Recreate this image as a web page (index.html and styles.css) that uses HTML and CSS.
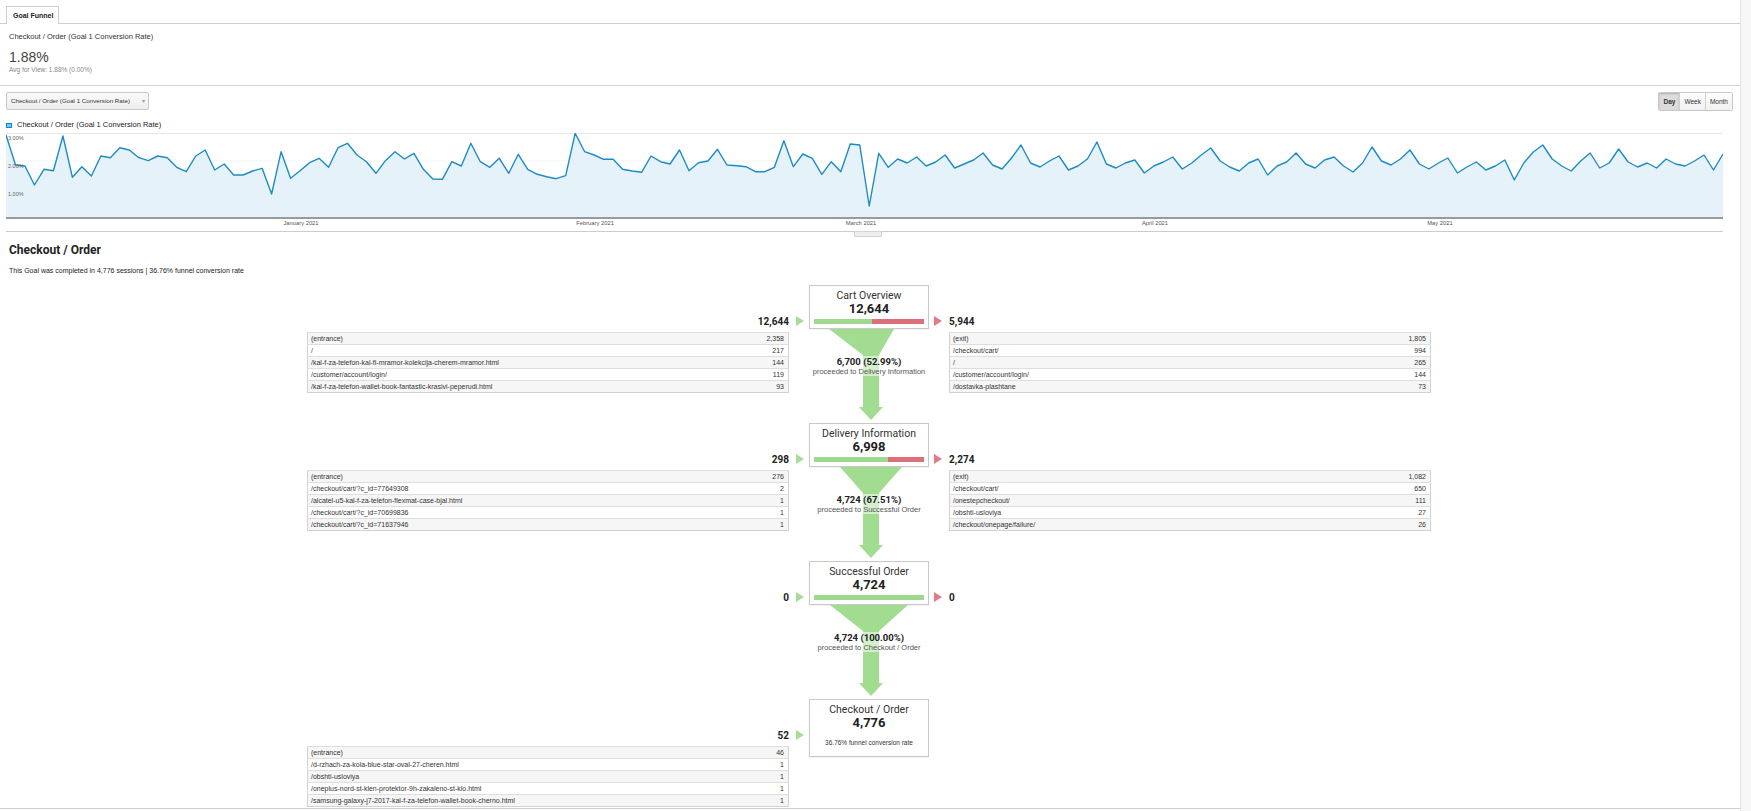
FILE: index.html
```html
<!DOCTYPE html>
<html>
<head>
<meta charset="utf-8">
<title>Goal Funnel</title>
<link rel="stylesheet" href="styles.css">
</head>
<body>
<div class="page">
  <div class="tabs"><div class="tab">Goal Funnel</div></div>

  <div class="summary">
    <div class="metric-title">Checkout / Order (Goal 1 Conversion Rate)</div>
    <div class="metric-value">1.88%</div>
    <div class="metric-avg">Avg for View: 1.88% (0.00%)</div>
  </div>

  <div class="controls">
    <div class="dropdown"><span class="dd-text">Checkout / Order (Goal 1 Conversion Rate)</span><span class="caret">▾</span></div>
    <div class="period"><span class="btn active">Day</span><span class="btn">Week</span><span class="btn">Month</span></div>
  </div>

  <div class="legend"><span class="swatch"></span>Checkout / Order (Goal 1 Conversion Rate)</div>

  <div class="chart">
    <svg class="chart-svg" viewBox="0 0 181 84" preserveAspectRatio="none">
      <line class="grid" x1="0" y1="0.5" x2="181" y2="0.5"/>
      <line class="grid faint" x1="0" y1="28" x2="181" y2="28"/>
      <line class="grid faint" x1="0" y1="56" x2="181" y2="56"/>
      <polygon class="area" points="0,84 0,2 1,32 2,33 3,52 4,36.3 5,37.7 6,3 7,44.3 8,33.7 9,43 10,23 11,24.7 12,14.7 13,17 14,24.7 15,27.7 16,23 17,24.7 18,34.3 19,38.7 20,23 21,17 22,37 23,31 24,42 25,42 26,38 27,35.3 28,61 29,18.7 30,45.3 31,37.7 32,29.7 33,25.3 34,34.3 35,14.7 36,10.3 37,22 38,28.7 39,40.3 40,27.7 41,18.7 42,26 43,20.3 44,36.3 45,46 46,46.3 47,28.7 48,33 49,10.3 50,28.7 51,34.3 52,25.3 53,40.3 54,21.3 55,36.3 56,41.3 57,43.7 58,45.7 59,42.7 60,0.3 61,18.7 62,22 63,26.3 64,26.3 65,36.3 66,38 67,39.3 68,23 69,28.7 70,31 71,17 72,37.7 73,29.7 74,28 75,16.3 76,32 77,32.7 78,33.7 79,38.7 80,38.7 81,34.3 82,7.7 83,33.7 84,21 85,25.3 86,41.3 87,28.7 88,38.7 89,11 90,12 91,73 92,20.3 93,34.3 94,26 95,30 96,24 97,33 98,29 99,22 100,35 101,31 102,27 103,20 104,32 105,36 106,25 107,12 108,30 109,34 110,28 111,23 112,37 113,33 114,26 115,9 116,31 117,35 118,30 119,27 120,40 121,33 122,29 123,24 124,36 125,30 126,22 127,15 128,28 129,34 130,38 131,30 132,26 133,42 134,33 135,29 136,20 137,31 138,35 139,27 140,24 141,33 142,39 143,30 144,14 145,28 146,32 147,26 148,17 149,31 150,36 151,30 152,25 153,40 154,34 155,29 156,37 157,33 158,27 159,47 160,30 161,19 162,12 163,26 164,33 165,38 166,28 167,20 168,35 169,30 170,16 171,29 172,34 173,30 174,35 175,26 176,31 177,33 178,28 179,22 180,37 181,21 181,84"/>
      <polyline class="line" points="0,2 1,32 2,33 3,52 4,36.3 5,37.7 6,3 7,44.3 8,33.7 9,43 10,23 11,24.7 12,14.7 13,17 14,24.7 15,27.7 16,23 17,24.7 18,34.3 19,38.7 20,23 21,17 22,37 23,31 24,42 25,42 26,38 27,35.3 28,61 29,18.7 30,45.3 31,37.7 32,29.7 33,25.3 34,34.3 35,14.7 36,10.3 37,22 38,28.7 39,40.3 40,27.7 41,18.7 42,26 43,20.3 44,36.3 45,46 46,46.3 47,28.7 48,33 49,10.3 50,28.7 51,34.3 52,25.3 53,40.3 54,21.3 55,36.3 56,41.3 57,43.7 58,45.7 59,42.7 60,0.3 61,18.7 62,22 63,26.3 64,26.3 65,36.3 66,38 67,39.3 68,23 69,28.7 70,31 71,17 72,37.7 73,29.7 74,28 75,16.3 76,32 77,32.7 78,33.7 79,38.7 80,38.7 81,34.3 82,7.7 83,33.7 84,21 85,25.3 86,41.3 87,28.7 88,38.7 89,11 90,12 91,73 92,20.3 93,34.3 94,26 95,30 96,24 97,33 98,29 99,22 100,35 101,31 102,27 103,20 104,32 105,36 106,25 107,12 108,30 109,34 110,28 111,23 112,37 113,33 114,26 115,9 116,31 117,35 118,30 119,27 120,40 121,33 122,29 123,24 124,36 125,30 126,22 127,15 128,28 129,34 130,38 131,30 132,26 133,42 134,33 135,29 136,20 137,31 138,35 139,27 140,24 141,33 142,39 143,30 144,14 145,28 146,32 147,26 148,17 149,31 150,36 151,30 152,25 153,40 154,34 155,29 156,37 157,33 158,27 159,47 160,30 161,19 162,12 163,26 164,33 165,38 166,28 167,20 168,35 169,30 170,16 171,29 172,34 173,30 174,35 175,26 176,31 177,33 178,28 179,22 180,37 181,21"/>
    </svg>
    <span class="ylabel y3">3.00%</span>
    <span class="ylabel y2">2.00%</span>
    <span class="ylabel y1">1.00%</span>
  </div>

  <div class="xaxis">
    <span class="xlabel" style="left:295px">January 2021</span>
    <span class="xlabel" style="left:589px">February 2021</span>
    <span class="xlabel" style="left:855px">March 2021</span>
    <span class="xlabel" style="left:1149px">April 2021</span>
    <span class="xlabel" style="left:1434px">May 2021</span>
  </div>
  <div class="slider"><span class="handle"></span></div>

  <div class="funnel-head">
    <h2>Checkout / Order</h2>
    <p>This Goal was completed in 4,776 sessions | 36.76% funnel conversion rate</p>
  </div>

  <div class="funnel">
    <!-- Step 1 -->
    <div class="side left r1">
      <div class="num-row"><span class="num">12,644</span><span class="tri green"></span></div>
      <table class="pages">
        <tr><td>(entrance)</td><td class="v">2,358</td></tr>
        <tr><td>/</td><td class="v">217</td></tr>
        <tr><td>/kal-f-za-telefon-kal-fi-mramor-kolekcija-cherem-mramor.html</td><td class="v">144</td></tr>
        <tr><td>/customer/account/login/</td><td class="v">119</td></tr>
        <tr><td>/kal-f-za-telefon-wallet-book-fantastic-krasivi-peperudi.html</td><td class="v">93</td></tr>
      </table>
    </div>
    <div class="step r1">
      <div class="step-title">Cart Overview</div>
      <div class="step-num">12,644</div>
      <div class="bar"><span class="ok" style="width:53%"></span><span class="out"></span></div>
    </div>
    <div class="side right r1">
      <div class="num-row"><span class="tri red"></span><span class="num">5,944</span></div>
      <table class="pages">
        <tr><td>(exit)</td><td class="v">1,805</td></tr>
        <tr><td>/checkout/cart/</td><td class="v">994</td></tr>
        <tr><td>/</td><td class="v">265</td></tr>
        <tr><td>/customer/account/login/</td><td class="v">144</td></tr>
        <tr><td>/dostavka-plashtane</td><td class="v">73</td></tr>
      </table>
    </div>
    <div class="conn c1">
      <svg viewBox="0 0 120 94"><polygon points="20,0 85,0 70,26 70,78 74,78 62,91 50,78 54,78 54,26"/></svg>
      <div class="conn-label"><b>6,700 (52.99%)</b><span>proceeded to Delivery Information</span></div>
    </div>

    <!-- Step 2 -->
    <div class="side left r3">
      <div class="num-row"><span class="num">298</span><span class="tri green"></span></div>
      <table class="pages">
        <tr><td>(entrance)</td><td class="v">276</td></tr>
        <tr><td>/checkout/cart/?c_id=77649308</td><td class="v">2</td></tr>
        <tr><td>/alcatel-u5-kal-f-za-telefon-flexmat-case-bjal.html</td><td class="v">1</td></tr>
        <tr><td>/checkout/cart/?c_id=70699836</td><td class="v">1</td></tr>
        <tr><td>/checkout/cart/?c_id=71637946</td><td class="v">1</td></tr>
      </table>
    </div>
    <div class="step r3">
      <div class="step-title">Delivery Information</div>
      <div class="step-num">6,998</div>
      <div class="bar"><span class="ok" style="width:67.5%"></span><span class="out"></span></div>
    </div>
    <div class="side right r3">
      <div class="num-row"><span class="tri red"></span><span class="num">2,274</span></div>
      <table class="pages">
        <tr><td>(exit)</td><td class="v">1,082</td></tr>
        <tr><td>/checkout/cart/</td><td class="v">650</td></tr>
        <tr><td>/onestepcheckout/</td><td class="v">111</td></tr>
        <tr><td>/obshti-usloviya</td><td class="v">27</td></tr>
        <tr><td>/checkout/onepage/failure/</td><td class="v">26</td></tr>
      </table>
    </div>
    <div class="conn c2">
      <svg viewBox="0 0 120 94"><polygon points="31,0 93,0 70,26 70,78 74,78 62,91 50,78 54,78 54,26"/></svg>
      <div class="conn-label"><b>4,724 (67.51%)</b><span>proceeded to Successful Order</span></div>
    </div>

    <!-- Step 3 -->
    <div class="side left r5">
      <div class="num-row"><span class="num">0</span><span class="tri green"></span></div>
    </div>
    <div class="step r5">
      <div class="step-title">Successful Order</div>
      <div class="step-num">4,724</div>
      <div class="bar"><span class="ok" style="width:100%"></span></div>
    </div>
    <div class="side right r5">
      <div class="num-row"><span class="tri red"></span><span class="num">0</span></div>
    </div>
    <div class="conn c3">
      <svg viewBox="0 0 120 94"><polygon points="21,0 99,0 70,26 70,78 74,78 62,91 50,78 54,78 54,26"/></svg>
      <div class="conn-label"><b>4,724 (100.00%)</b><span>proceeded to Checkout / Order</span></div>
    </div>

    <!-- Step 4 -->
    <div class="side left r7">
      <div class="num-row"><span class="num">52</span><span class="tri green"></span></div>
      <table class="pages">
        <tr><td>(entrance)</td><td class="v">46</td></tr>
        <tr><td>/d-rzhach-za-kola-blue-star-oval-27-cheren.html</td><td class="v">1</td></tr>
        <tr><td>/obshti-usloviya</td><td class="v">1</td></tr>
        <tr><td>/oneplus-nord-st-klen-protektor-9h-zakaleno-st-klo.html</td><td class="v">1</td></tr>
        <tr><td>/samsung-galaxy-j7-2017-kal-f-za-telefon-wallet-book-cherno.html</td><td class="v">1</td></tr>
      </table>
    </div>
    <div class="step goal r7">
      <div class="step-title">Checkout / Order</div>
      <div class="step-num">4,776</div>
      <div class="step-rate">36.76% funnel conversion rate</div>
    </div>
  </div>
</div>
<div class="scrollbar"></div>
</body>
</html>
```

FILE: styles.css
```css
html, body {
  margin: 0;
  padding: 0;
  background: #ffffff;
  overflow: hidden;
}
body {
  display: flex;
  width: 1751px;
  height: 811px;
  font-family: "Liberation Sans", Arial, sans-serif;
  color: #333;
}
.page {
  width: 1740px;
  flex: none;
}
.scrollbar {
  flex: 1;
  background: #f7f7f7;
  border-left: 1px solid #e4e4e4;
}

/* tabs */
.tabs {
  height: 23px;
  border-bottom: 1px solid #cfcfcf;
  display: flex;
  align-items: flex-end;
  padding-left: 6px;
}
.tab {
  height: 17px;
  line-height: 17px;
  padding: 0 5px 0 6px;
  border: 1px solid #cfcfcf;
  border-bottom: none;
  background: #fff;
  margin-bottom: -1px;
  font-size: 7px;
  font-weight: bold;
  color: #222;
}

/* summary */
.summary {
  padding: 8px 9px 11px;
  border-bottom: 1px solid #d6d6d6;
}
.metric-title {
  font-size: 7.5px;
  line-height: 10px;
  color: #333;
}
.metric-value {
  margin-top: 7px;
  font-size: 14px;
  line-height: 16px;
  color: #444;
}
.metric-avg {
  margin-top: 1px;
  font-size: 6.5px;
  line-height: 8px;
  color: #888;
}

/* controls */
.controls {
  display: flex;
  justify-content: space-between;
  align-items: flex-start;
  padding: 6px 7px 0 6px;
}
.dropdown {
  box-sizing: border-box;
  width: 143px;
  height: 18px;
  line-height: 16px;
  border: 1px solid #c8c8c8;
  border-radius: 2px;
  background: linear-gradient(#fafafa, #eeeeee);
  font-size: 6.2px;
  color: #333;
  padding-left: 4px;
  display: flex;
  white-space: nowrap;
  overflow: hidden;
}
.dd-text { flex: none; }
.caret {
  color: #999;
  font-size: 6px;
  margin-left: auto;
  width: 10px;
  flex: none;
  text-align: center;
}
.period {
  display: flex;
  height: 19px;
  border: 1px solid #c8c8c8;
  border-radius: 2px;
  box-sizing: border-box;
  overflow: hidden;
}
.btn {
  font-size: 6.5px;
  line-height: 17px;
  padding: 0 4px;
  background: linear-gradient(#fdfdfd, #f1f1f1);
  color: #333;
  border-left: 1px solid #d0d0d0;
}
.btn:first-child { border-left: none; }
.btn.active {
  background: #dcdcdc;
  box-shadow: inset 0 1px 2px rgba(0,0,0,0.2);
  font-weight: bold;
}

/* legend */
.legend {
  margin-top: 9px;
  padding-left: 6px;
  font-size: 7.5px;
  line-height: 10px;
  color: #222;
  display: flex;
  align-items: center;
}
.swatch {
  width: 6px;
  height: 5px;
  background: #7fc4e6;
  border: 1.5px solid #058dc7;
  border-radius: 0;
  margin-right: 5px;
  box-sizing: border-box;
}

/* chart */
.chart {
  position: relative;
  margin: 3px 0 0 6px;
  width: 1717px;
  height: 84px;
  border-bottom: 2px solid #9a9a9a;
}
.chart-svg {
  display: block;
  width: 1717px;
  height: 84px;
}
.chart-svg .grid {
  stroke: #e8e8e8;
  stroke-width: 1;
  vector-effect: non-scaling-stroke;
}
.chart-svg .grid.faint { stroke: #f1f6f9; }
.chart-svg .area {
  fill: #e5f2fa;
  stroke: none;
}
.chart-svg .line {
  fill: none;
  stroke: #1e8bc3;
  stroke-width: 1.4;
  stroke-linejoin: round;
  vector-effect: non-scaling-stroke;
}
.ylabel {
  position: absolute;
  left: 2px;
  font-size: 5.5px;
  line-height: 7px;
  color: #666;
}
.y3 { top: 2px; }
.y2 { top: 30px; }
.y1 { top: 58px; }

.xaxis {
  position: relative;
  height: 12px;
  margin-left: 6px;
  width: 1717px;
}
.xlabel {
  position: absolute;
  top: 0;
  transform: translateX(-50%);
  font-size: 5.8px;
  line-height: 8px;
  color: #555;
  white-space: nowrap;
}
.slider {
  position: relative;
  margin-left: 6px;
  width: 1717px;
  border-top: 1px solid #cccccc;
}
.handle {
  position: absolute;
  left: 848px;
  top: -1px;
  width: 28px;
  height: 6px;
  background: #eeeeee;
  border: 1px solid #d4d4d4;
  box-sizing: border-box;
}

/* funnel header */
.funnel-head {
  padding-left: 9px;
}
.funnel-head h2 {
  margin: 11px 0 0;
  font-family: Roboto, "Liberation Sans", sans-serif;
  font-weight: 700;
  font-size: 12px;
  line-height: 14px;
  color: #222;
}
.funnel-head p {
  margin: 9px 0 0;
  font-size: 7px;
  line-height: 10px;
  color: #222;
}

/* funnel */
.funnel {
  margin-top: 9px;
  padding-left: 307px;
  display: grid;
  grid-template-columns: 497px 120px 497px;
  grid-template-rows: 44px 94px 44px 94px 44px 94px auto;
  column-gap: 5px;
  border-bottom: 1px solid #d0d0d0;
  padding-bottom: 1px;
  font-family: Roboto, "Liberation Sans", sans-serif;
}
.r1 { grid-row: 1 / span 2; }
.r3 { grid-row: 3 / span 2; }
.r5 { grid-row: 5 / span 2; }
.r7 { grid-row: 7; }
.step.r1 { grid-row: 1; }
.step.r3 { grid-row: 3; }
.step.r5 { grid-row: 5; }
.c1 { grid-row: 2; }
.c2 { grid-row: 4; }
.c3 { grid-row: 6; }

.side { padding-top: 30px; display: flex; flex-direction: column; }
.side.left { grid-column: 1; align-items: flex-end; }
.side.right { grid-column: 3; align-items: flex-start; }
.num-row {
  height: 12px;
  display: flex;
  align-items: center;
  gap: 7px;
}
.num {
  font-size: 10px;
  font-weight: 700;
  color: #222;
}
.tri {
  width: 0;
  height: 0;
  border-top: 5px solid transparent;
  border-bottom: 5px solid transparent;
  border-left: 8px solid #a6dc98;
}
.tri.red { border-left-color: #e57a86; }

.pages {
  margin-top: 5px;
  width: 482px;
  border-collapse: collapse;
  border: 1px solid #d2d2d2;
  font-family: "Liberation Sans", Arial, sans-serif;
  font-size: 7px;
  color: #333;
  background: #fff;
}
.side.left .pages { margin-right: 15px; }
.side.right .pages { margin-left: 15px; }
.pages td {
  height: 11px;
  padding: 0 3px;
  line-height: 11px;
  border-top: 1px solid #dedede;
  white-space: nowrap;
}
.pages tr:nth-child(odd) td { background: #f6f6f6; }
.pages td.v { text-align: right; padding-right: 4px; }

.step {
  grid-column: 2;
  box-sizing: border-box;
  height: 44px;
  border: 1px solid #c9c9c9;
  background: #fff;
  text-align: center;
  padding-top: 3px;
  align-self: start;
  box-shadow: 0 1px 1px rgba(0,0,0,0.04);
}
.step.goal { height: 58px; }
.step-title {
  font-size: 10.5px;
  line-height: 13px;
  color: #333;
}
.step-num {
  font-size: 13px;
  font-weight: 700;
  line-height: 14px;
  color: #222;
}
.bar {
  display: flex;
  height: 5px;
  margin: 3px 4px 0;
  background: #dc6f7a;
}
.bar .ok { background: #9fd98e; }
.bar .out { flex: 1; background: #dc6f7a; }
.step-rate {
  margin-top: 8px;
  font-family: "Liberation Sans", Arial, sans-serif;
  font-size: 6.5px;
  line-height: 9px;
  color: #333;
}

.conn {
  grid-column: 2;
  position: relative;
  height: 94px;
}
.conn svg {
  display: block;
  width: 120px;
  height: 94px;
}
.conn polygon { fill: #a2dc91; }
.conn-label {
  position: absolute;
  top: 27px;
  left: 50%;
  transform: translateX(-50%);
  display: flex;
  flex-direction: column;
  align-items: center;
  white-space: nowrap;
  background: rgba(255,255,255,0.55);
  padding: 0 1px;
}
.conn-label b {
  font-size: 9.5px;
  line-height: 11px;
  color: #222;
}
.conn-label span {
  font-family: "Liberation Sans", Arial, sans-serif;
  font-size: 7.5px;
  line-height: 9px;
  color: #555;
}
```
